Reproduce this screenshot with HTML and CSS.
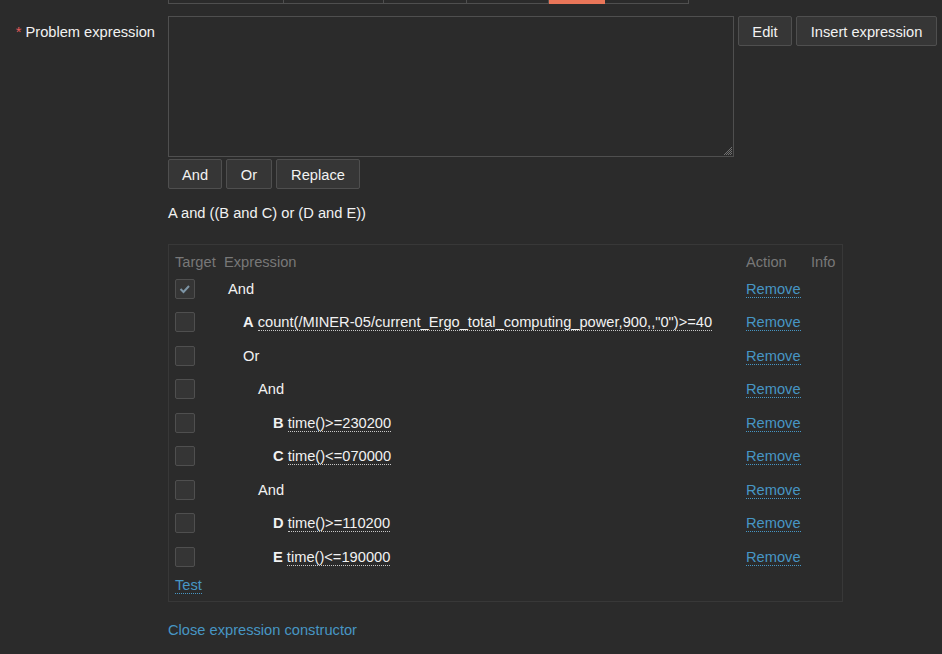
FILE: index.html
```html
<!DOCTYPE html>
<html>
<head>
<meta charset="utf-8">
<link rel="stylesheet" href="styles.css">
</head>
<body>
<div class="severity">
  <span class="seg seg-1"></span>
  <span class="seg seg-2"></span>
  <span class="seg seg-3"></span>
  <span class="seg seg-4"></span>
  <span class="seg seg-5 seg-active"></span>
  <span class="seg seg-6"></span>
</div>
<div class="form-row">
  <label class="form-label"><span class="req">*</span>Problem expression</label>
  <div class="form-field">
    <div class="expr-row">
      <div class="textarea"><span class="grip"></span></div>
      <button class="btn btn-edit">Edit</button>
      <button class="btn btn-insert">Insert expression</button>
    </div>
    <div class="ops">
      <button class="btn btn-and">And</button>
      <button class="btn btn-or">Or</button>
      <button class="btn btn-replace">Replace</button>
    </div>
    <div class="summary">A and ((B and C) or (D and E))</div>
    <div class="constructor">
      <div class="row head">
        <span>Target</span><span>Expression</span><span>Action</span><span>Info</span>
      </div>
      <div class="row">
        <span class="cb checked"><svg width="18" height="18" viewBox="0 0 18 18"><polyline points="4.5,9 7.5,12 13,6" fill="none" stroke="#7d95a6" stroke-width="2"/></svg></span>
        <span class="expr lvl-0">And</span>
        <span><a class="link">Remove</a></span><span></span>
      </div>
      <div class="row">
        <span class="cb"></span>
        <span class="expr lvl-1"><b>A</b> <a class="expr-link">count(/MINER-05/current_Ergo_total_computing_power,900,,"0")&gt;=40</a></span>
        <span><a class="link">Remove</a></span><span></span>
      </div>
      <div class="row">
        <span class="cb"></span>
        <span class="expr lvl-1">Or</span>
        <span><a class="link">Remove</a></span><span></span>
      </div>
      <div class="row">
        <span class="cb"></span>
        <span class="expr lvl-2">And</span>
        <span><a class="link">Remove</a></span><span></span>
      </div>
      <div class="row">
        <span class="cb"></span>
        <span class="expr lvl-3"><b>B</b> <a class="expr-link">time()&gt;=230200</a></span>
        <span><a class="link">Remove</a></span><span></span>
      </div>
      <div class="row">
        <span class="cb"></span>
        <span class="expr lvl-3"><b>C</b> <a class="expr-link">time()&lt;=070000</a></span>
        <span><a class="link">Remove</a></span><span></span>
      </div>
      <div class="row">
        <span class="cb"></span>
        <span class="expr lvl-2">And</span>
        <span><a class="link">Remove</a></span><span></span>
      </div>
      <div class="row">
        <span class="cb"></span>
        <span class="expr lvl-3"><b>D</b> <a class="expr-link">time()&gt;=110200</a></span>
        <span><a class="link">Remove</a></span><span></span>
      </div>
      <div class="row">
        <span class="cb"></span>
        <span class="expr lvl-3"><b>E</b> <a class="expr-link">time()&lt;=190000</a></span>
        <span><a class="link">Remove</a></span><span></span>
      </div>
      <div class="test-row"><a class="link">Test</a></div>
    </div>
    <div class="close-row"><a class="link">Close expression constructor</a></div>
  </div>
</div>
</body>
</html>
```
FILE: styles.css
```css
body {
  margin: 0;
  background: #2b2b2b;
  color: #f2f2f2;
  font-family: "Liberation Sans", Arial, sans-serif;
  font-size: 14.667px;
  line-height: 16px;
}

.severity {
  display: flex;
  margin-left: 168px;
  height: 4px;
}
.seg {
  box-sizing: border-box;
  height: 4px;
  border-bottom: 1px solid #4f4f4f;
  border-right: 1px solid #4f4f4f;
}
.seg-1 { width: 116px; border-left: 1px solid #4f4f4f; }
.seg-2 { width: 100px; }
.seg-3 { width: 83px; }
.seg-4 { width: 82px; }
.seg-5 { width: 56px; }
.seg-6 { width: 84px; }
.seg-active {
  background: #e97659;
  border-color: #e97659;
}

.form-row {
  display: flex;
  margin-top: 12px;
}
.form-label {
  box-sizing: border-box;
  width: 155px;
  margin-right: 13px;
  padding-top: 8px;
  text-align: right;
  white-space: nowrap;
}
.req {
  color: #e45959;
  margin-right: 4px;
}

.form-field {
  display: flex;
  flex-direction: column;
  align-items: flex-start;
}

.expr-row {
  display: flex;
  gap: 4px;
  align-items: flex-start;
}
.textarea {
  position: relative;
  box-sizing: border-box;
  width: 566px;
  height: 141px;
  border: 1px solid #4f4f4f;
  background: #2b2b2b;
}
.grip {
  position: absolute;
  right: 1px;
  bottom: 1px;
  width: 9px;
  height: 9px;
  background: repeating-conic-gradient(#707070 0 25%, transparent 0 50%) 0 0 / 2px 2px;
  clip-path: polygon(100% 0, 100% 100%, 0 100%);
}

.btn {
  box-sizing: border-box;
  height: 30px;
  padding: 1px 0 0;
  border: 1px solid #4f4f4f;
  border-radius: 2px;
  background: #363636;
  color: #f2f2f2;
  font-family: inherit;
  font-size: 14.667px;
  line-height: 16px;
  text-align: center;
}
.btn-edit { width: 54px; }
.btn-insert { width: 141px; }
.btn-and { width: 54px; }
.btn-or { width: 46px; }
.btn-replace { width: 84px; }

.ops {
  display: flex;
  gap: 4px;
  margin-top: 2px;
}

.summary {
  margin-top: 16px;
}

.constructor {
  box-sizing: border-box;
  width: 675px;
  margin-top: 23px;
  padding: 0 6px 4px;
  border: 1px solid #383838;
}
.row {
  display: grid;
  grid-template-columns: 49px 522px 65px 1fr;
  align-items: center;
  height: 33.5px;
}
.row.head {
  box-sizing: border-box;
  height: 26.75px;
  padding-top: 9px;
  align-items: start;
  color: #787878;
}
.expr { white-space: nowrap; }
.lvl-0 { padding-left: 4px; }
.lvl-1 { padding-left: 19px; }
.lvl-2 { padding-left: 34px; }
.lvl-3 { padding-left: 49px; }
.expr b { font-weight: bold; }

.cb {
  box-sizing: border-box;
  display: flex;
  align-items: center;
  justify-content: center;
  width: 20px;
  height: 20px;
  border: 1px solid #4f4f4f;
  border-radius: 2px;
  background: #353535;
}

.expr-link {
  color: #f2f2f2;
  border-bottom: 1px dotted #c8c8c8;
}
.link {
  color: #4796c4;
  border-bottom: 1px dotted #4796c4;
}

.test-row {
  display: flex;
  align-items: center;
  height: 24px;
}

.close-row {
  margin-top: 20px;
}
```
